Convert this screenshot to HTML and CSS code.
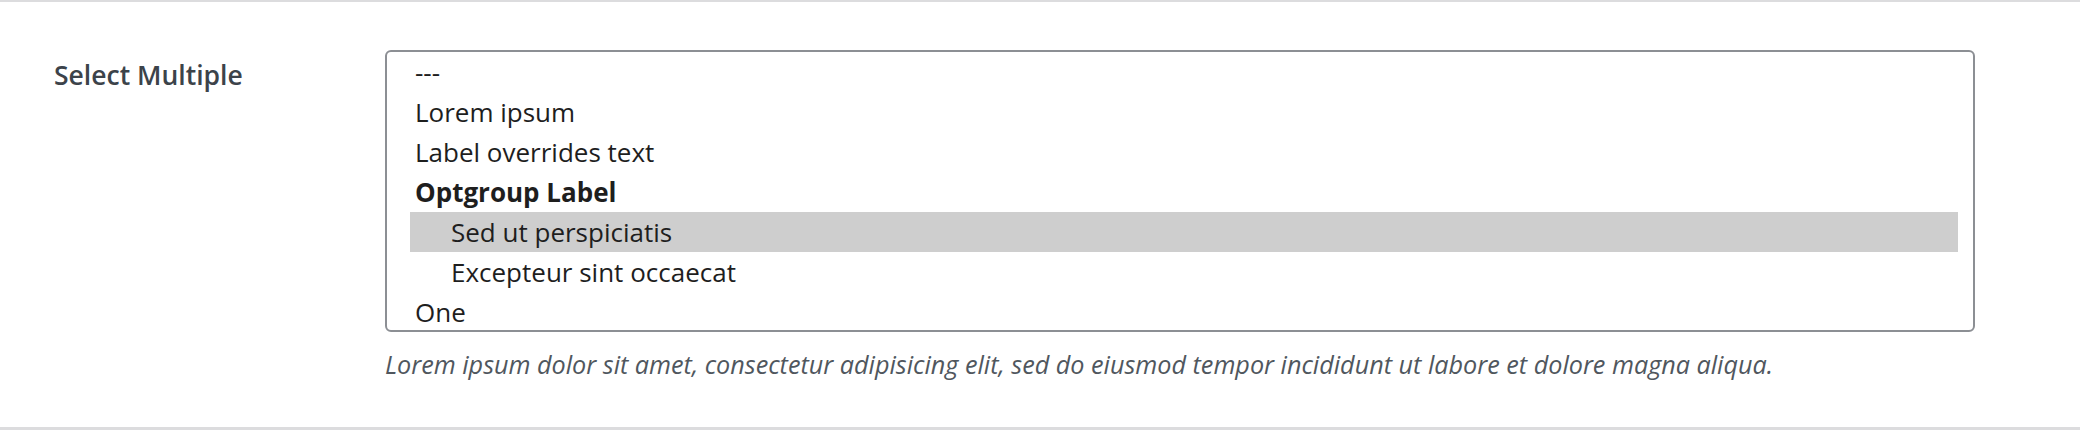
FILE: index.html
```html
<!DOCTYPE html>
<html lang="en">
<head>
<meta charset="utf-8">
<title>Select Multiple</title>
<link rel="stylesheet" href="styles.css">
</head>
<body>
<div class="form-row">
  <div class="row-label">Select Multiple</div>
  <div class="row-field">
    <div class="listbox" role="listbox" aria-multiselectable="true">
      <div class="opt" role="option">---</div>
      <div class="opt" role="option">Lorem ipsum</div>
      <div class="opt" role="option">Label overrides text</div>
      <div class="group" role="group">
        <div class="group-label">Optgroup Label</div>
        <div class="opt opt-child selected" role="option" aria-selected="true">Sed ut perspiciatis</div>
        <div class="opt opt-child" role="option">Excepteur sint occaecat</div>
      </div>
      <div class="opt" role="option">One</div>
    </div>
    <p class="description">Lorem ipsum dolor sit amet, consectetur adipisicing elit, sed do eiusmod tempor incididunt ut labore et dolore magna aliqua.</p>
  </div>
</div>
</body>
</html>
```
FILE: styles.css
```css
html, body {
  margin: 0;
  padding: 0;
  background: #ffffff;
}

body {
  font-family: "Open Sans", "Noto Sans", sans-serif;
  width: 2080px;
  height: 430px;
  overflow: hidden;
}

.form-row {
  box-sizing: border-box;
  height: 430px;
  border-top: 2px solid #dcdcde;
  border-bottom: 3px solid #dcdcde;
  display: flex;
  align-items: flex-start;
  padding: 48px 0 0 54px;
}

.row-label {
  width: 331px;
  flex: none;
  margin-top: 5px;
  font-size: 26.5px;
  line-height: 40px;
  font-weight: 600;
  color: #3c434a;
}

.row-field {
  width: 1590px;
  flex: none;
}

.listbox {
  box-sizing: border-box;
  height: 282px;
  border: 2px solid #8c8f94;
  border-radius: 6px;
  padding: 0 15px 0 23px;
  overflow: hidden;
  color: #1e1e1e;
  font-size: 26px;
}

.opt,
.group-label {
  height: 40px;
  line-height: 40px;
  padding-left: 5px;
  white-space: nowrap;
}

.group-label {
  font-weight: 700;
}

.opt-child {
  padding-left: 41px;
}

.selected {
  background: #cecece;
}

.description {
  margin: 13px 0 0 0;
  font-size: 25.2px;
  line-height: 39px;
  font-style: italic;
  color: #50575e;
}
```
